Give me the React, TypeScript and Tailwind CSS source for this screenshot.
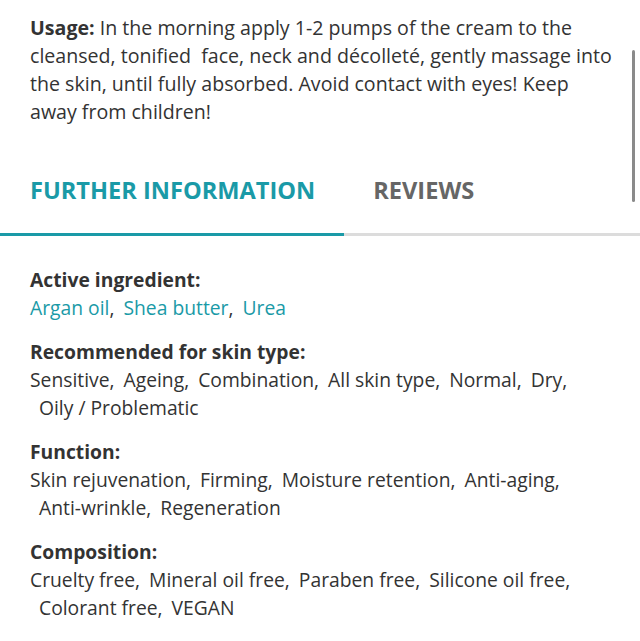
import React from "react";

const sections: { title: string; items: string[]; teal?: boolean }[] = [
  { title: "Active ingredient:", items: ["Argan oil", "Shea butter", "Urea"], teal: true },
  {
    title: "Recommended for skin type:",
    items: ["Sensitive", "Ageing", "Combination", "All skin type", "Normal", "Dry", "Oily / Problematic"],
  },
  {
    title: "Function:",
    items: ["Skin rejuvenation", "Firming", "Moisture retention", "Anti-aging", "Anti-wrinkle", "Regeneration"],
  },
  {
    title: "Composition:",
    items: ["Cruelty free", "Mineral oil free", "Paraben free", "Silicone oil free", "Colorant free", "VEGAN"],
  },
];

export default function App() {
  return (
    <div
      className="relative w-[640px] h-[641px] overflow-hidden bg-white text-[#333333]"
      style={{ fontFamily: '"Open Sans", "Noto Sans", sans-serif' }}
    >
      <p className="pl-[30px] pr-[26px] pt-[14px] text-[19.6px] leading-[28px]">
        <span className="font-bold">Usage:</span> In the morning apply 1-2 pumps of the cream to the cleansed, tonified&nbsp; face, neck and décolleté, gently massage into the skin, until fully absorbed. Avoid contact with eyes! Keep away from children!
      </p>

      <div className="mt-[50px] flex border-b-[3px] border-[#dcdcdc]">
        <div className="-mb-[3px] border-b-[3px] border-[#1a9aa7] pl-[30px] pr-[29px] pb-[29px] text-[23.6px] font-bold leading-[28px] text-[#1a9aa7]">
          FURTHER INFORMATION
        </div>
        <div className="px-[29px] pb-[29px] text-[23.6px] font-bold leading-[28px] text-[#666666]">
          REVIEWS
        </div>
      </div>

      <div className="flex flex-col gap-[16px] px-[30px] pt-[30px] text-[19.3px] leading-[28px]">
        {sections.map((s) => (
          <div key={s.title}>
            <div className="font-bold">{s.title}</div>
            <div className={s.teal ? "text-[#1a9aa7]" : ""}>
              {s.items.map((it, i) => (
                <span
                  key={it}
                  className={i === 0 ? "inline-block" : "inline-block ml-[9px]"}
                >
                  <span>{it}</span>
                  {i < s.items.length - 1 ? <span className="text-[#333333]">,</span> : null}
                </span>
              ))}
            </div>
          </div>
        ))}
      </div>

      <div className="absolute left-[632px] top-[50px] h-[152px] w-[3px] rounded-full bg-[#8a8a8a]" />
    </div>
  );
}
